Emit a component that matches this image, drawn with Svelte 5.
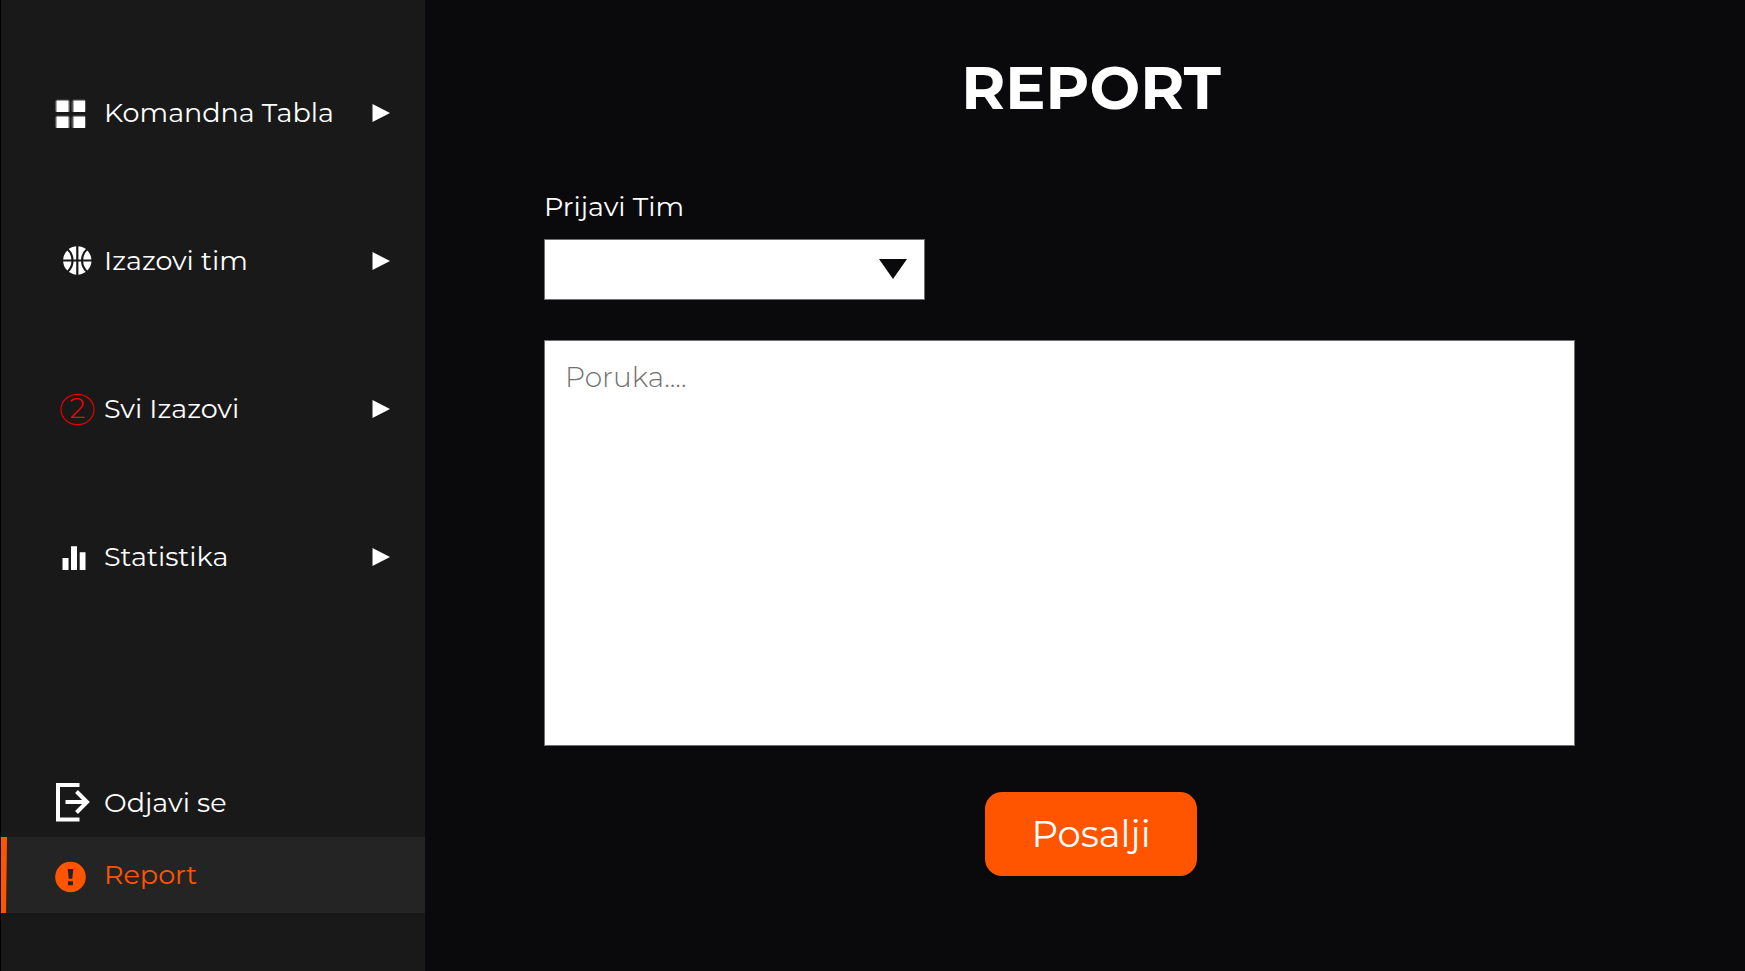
<script>
  const items = [
    { icon: 'grid', label: 'Komandna Tabla' },
    { icon: 'ball', label: 'Izazovi tim' },
    { icon: 'count', label: 'Svi Izazovi' },
    { icon: 'bars', label: 'Statistika' }
  ];
  let message = $state('');
  let team = $state('');
</script>

{#snippet icon(name)}
  <svg class="icon" viewBox="0 0 48 48" aria-hidden="true">
    {#if name === 'grid'}
      <g fill="#555">
        <rect x="3" y="10" width="15" height="14" rx="3" />
        <rect x="19.500" y="10" width="14.500" height="14" rx="3" />
        <rect x="3" y="26" width="15" height="14" rx="3" />
        <rect x="19.500" y="26" width="14.500" height="14" rx="3" />
      </g>
      <path stroke="#191919" d="M3 11h31M3 23.500h31M3 27h31M3 39.500h31" />
      <g fill="#fff">
        <rect x="4.500" y="11.500" width="12" height="11.500" />
        <rect x="21.500" y="11.500" width="11.500" height="11.500" />
        <rect x="4.500" y="27.500" width="12" height="11.500" />
        <rect x="21.500" y="27.500" width="11.500" height="11.500" />
      </g>
    {:else if name === 'ball'}
      <circle cx="25.3" cy="23.500" r="14.2" fill="#fff" />
      <g fill="none" stroke="#191919" stroke-width="2.200">
        <path d="M25.3 8.500v30M10.500 23.500h29.600M15.300 12c7 6 7 17 0 23M35.300 12c-7 6-7 17 0 23" />
      </g>
    {:else if name === 'count'}
      <ellipse cx="25.500" cy="24.500" rx="16.500" ry="15.200" fill="none" stroke="#e60000" stroke-width="1.200" />
      <text x="25.500" y="33" text-anchor="middle">2</text>
    {:else if name === 'bars'}
      <path fill="#fff" d="M10.500 25h6v12h-6zM19 13.300h6v23.700h-6zM27.700 19.300h5.800V37h-5.800z" />
    {:else if name === 'logout'}
      <g fill="none" stroke="#fff" stroke-width="4">
        <path d="M27.500 6H6v34.500h21.500" />
        <path d="M13.500 23H34M24.500 12.500L35 23 24.500 33.500" />
      </g>
    {:else}
      <circle cx="18.500" cy="26" r="15.300" fill="#ff5500" />
      <path fill="#242424" d="M15.700 18h5.600l-1 9.700h-3.600zM16 30.200h5v4h-5z" />
    {/if}
  </svg>
{/snippet}

<div class="page">
  <aside>
    <nav>
      {#each items as item}
        <a class="row tall" href="#{item.icon}">
          {@render icon(item.icon)}
          <span>{item.label}</span>
          <svg class="arrow" viewBox="0 0 18 18" aria-hidden="true"><path fill="#fff" d="M0.500 0L18 9 0.500 18z" /></svg>
        </a>
      {/each}
    </nav>
    <div class="bottom">
      <a class="row" href="#odjava">{@render icon('logout')}<span>Odjavi se</span></a>
      <a class="row active" href="#report" aria-current="page">
        <svg class="marker" viewBox="0 0 6 76" aria-hidden="true"><path fill="#ff5500" d="M0 0h6L5 76H0z" /></svg>
        {@render icon('report')}<span>Report</span>
      </a>
    </div>
  </aside>

  <main>
    <h1>REPORT</h1>
    <form onsubmit={(e) => e.preventDefault()}>
      <div class="fields">
        <label for="team">Prijavi Tim</label>
        <div class="select">
          <select id="team" bind:value={team}><option value=""></option></select>
          <svg viewBox="0 0 28 20" aria-hidden="true"><path fill="#0a0a0c" d="M0 0h28L14 20z" /></svg>
        </div>
        <textarea aria-label="Poruka" placeholder="Poruka...." bind:value={message}></textarea>
      </div>
      <button type="submit">Posalji</button>
    </form>
  </main>
</div>

<style>
  :global(body) {
    margin: 0;
    background: #0a0a0c;
  }
  .page,
  .page * {
    box-sizing: border-box;
  }
  .page {
    display: flex;
    min-height: 100vh;
    font-family: Montserrat, Inter, sans-serif;
    font-size: 27px;
    line-height: 36px;
    color: #fff;
  }
  aside {
    display: flex;
    flex-direction: column;
    flex: 0 0 425px;
    padding: 39px 0 58px;
    background: #191919;
    border-left: 1px solid #000;
  }
  .row {
    display: flex;
    align-items: center;
    height: 68px;
    padding: 0 35px 0 51px;
    gap: 4px;
    color: #fff;
    text-decoration: none;
  }
  .row span {
    flex: 1;
    white-space: nowrap;
  }
  .tall {
    height: 148px;
  }
  .icon {
    flex: none;
    width: 48px;
    height: 48px;
  }
  .icon text {
    font-size: 28px;
    font-weight: 300;
    fill: #ff0000;
  }
  .arrow {
    flex: none;
    width: 18px;
    height: 18px;
  }
  .bottom {
    margin-top: auto;
  }
  .active {
    position: relative;
    height: 76px;
    background: #242424;
    color: #ff5500;
  }
  .marker {
    position: absolute;
    left: 0;
    top: 0;
    width: 6px;
    height: 100%;
  }
  main {
    flex: 1;
    min-width: 0;
    padding: 52px 0 0 12px;
  }
  h1 {
    margin: 0;
    font-size: 60px;
    line-height: 72px;
    font-weight: 700;
    text-align: center;
  }
  form {
    display: flex;
    flex-direction: column;
    align-items: center;
    gap: 46px;
    margin-top: 65px;
  }
  .fields {
    display: flex;
    flex-direction: column;
    align-self: stretch;
    margin: 0 170px 0 107px;
  }
  label {
    margin-bottom: 14px;
  }
  .select {
    position: relative;
    width: 381px;
    max-width: 100%;
    height: 61px;
    margin-bottom: 40px;
  }
  .select svg {
    position: absolute;
    right: 18px;
    top: 20px;
    width: 28px;
    height: 20px;
    pointer-events: none;
  }
  select,
  textarea {
    display: block;
    width: 100%;
    border: 1px solid #707070;
    border-radius: 0;
    background: #fff;
    font: inherit;
    color: #0a0a0c;
  }
  select {
    height: 100%;
    padding: 0 50px 0 20px;
    appearance: none;
  }
  textarea {
    height: 406px;
    padding: 18px 20px;
    resize: none;
    font-size: 28px;
    font-weight: 300;
  }
  textarea::placeholder {
    color: #707070;
    opacity: 1;
  }
  button {
    width: 212px;
    height: 84px;
    border: 0;
    border-radius: 17px;
    background: #ff5500;
    color: #fff;
    font: inherit;
    font-size: 37px;
  }
</style>
